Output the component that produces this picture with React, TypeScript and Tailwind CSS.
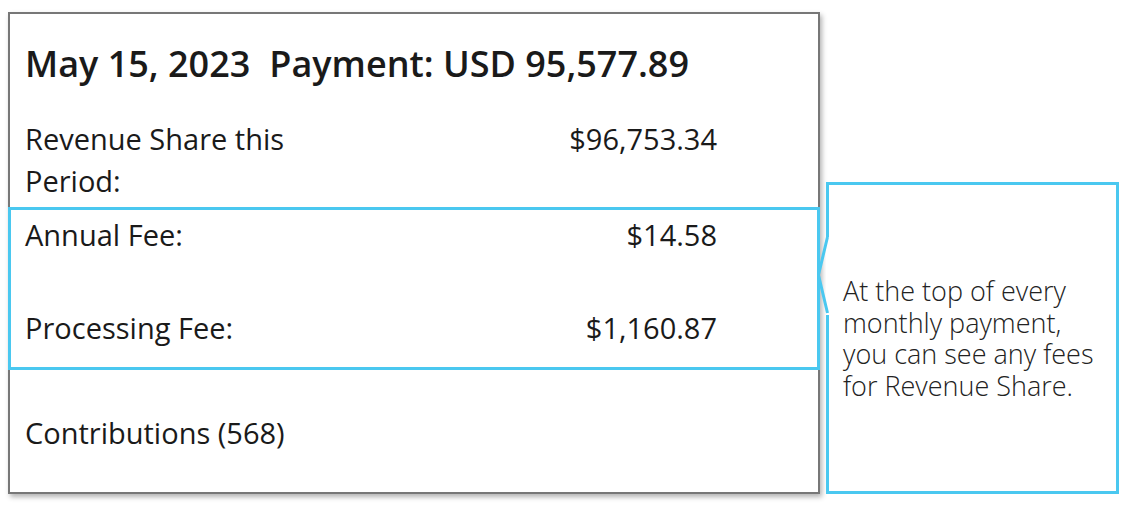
export default function App() {
  return (
    <div className="flex items-end bg-white pl-[8px] pb-[19px] w-[1135px] h-[513px] font-['Open_Sans',sans-serif] text-[#1a1a1a]">
      <div className="w-[812px] h-[482px] shrink-0 border-2 border-[#777] bg-white shadow-[2px_3px_5px_rgba(0,0,0,0.3)]">
        <div className="pt-[28px] pl-[15px] pr-[101px]">
          <h1 className="flex gap-[19px] text-[36px] leading-[44px] font-semibold">
            <span>May 15, 2023</span>
            <span>Payment: USD 95,577.89</span>
          </h1>
          <div className="mt-[32px] flex justify-between text-[29px] leading-[42px]">
            <span className="w-[300px]">Revenue Share this Period:</span>
            <span>$96,753.34</span>
          </div>
        </div>
        <div className="-mx-[2px] mt-[5px] h-[163px] border-[3px] border-[#4ac8f0] pt-[4px] pl-[14px] pr-[100px] text-[29px] leading-[42px]">
          <div className="flex justify-between">
            <span>Annual Fee:</span>
            <span>$14.58</span>
          </div>
          <div className="mt-[51px] flex justify-between">
            <span>Processing Fee:</span>
            <span>$1,160.87</span>
          </div>
        </div>
        <div className="mt-[42px] pl-[15px] text-[29px] leading-[42px]">Contributions (568)</div>
      </div>
      <div className="relative ml-[6px] flex h-[312px] w-[293px] shrink-0 items-center border-[3px] border-[#4ac8f0] bg-white pl-[14px] pr-[6px]">
        <p className="text-[27px] leading-[31.5px] font-light text-[#222]">
          At the top of every monthly payment, you can see any fees for Revenue Share.
        </p>
        <svg className="absolute left-[-13px] top-[48px]" width="16" height="86" viewBox="0 0 16 86">
          <rect x="10" y="4" width="6" height="78" fill="white" />
          <polyline points="11.5,4 2.5,42 11.5,80" fill="none" stroke="#4ac8f0" strokeWidth="3" />
        </svg>
      </div>
    </div>
  )
}
